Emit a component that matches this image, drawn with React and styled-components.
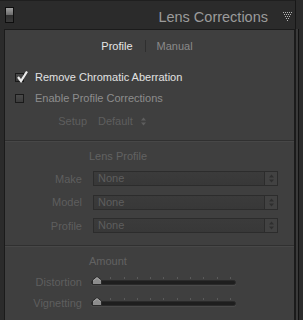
import React from 'react';
import styled, { createGlobalStyle } from 'styled-components';

const GlobalStyle = createGlobalStyle`
  html, body {
    margin: 0;
    padding: 0;
    background: #2b2b2b;
  }
  body {
    font-family: 'Liberation Sans', Arial, sans-serif;
  }
`;

const Frame = styled.div`
  display: flex;
  width: 303px;
  height: 320px;
  overflow: hidden;
  background: #2b2b2b;
`;

const Main = styled.div`
  width: 296px;
  display: flex;
  flex-direction: column;
`;

const Side = styled.div`
  flex: 1;
  display: flex;
  flex-direction: column;
`;

const SideCap = styled.div`
  height: 29px;
  background: #2b2b2b;
`;

const SideRail = styled.div`
  flex: 1;
  background: linear-gradient(
    to right,
    #3a3a3a 0 2px,
    #121212 2px 3px,
    #2b2b2b 3px
  );
`;

const Header = styled.div`
  height: 29px;
  box-sizing: border-box;
  border-top: 1px solid #1f1f1f;
  border-right: 1px solid #171717;
  display: flex;
  align-items: center;
  padding-left: 5px;
`;

const Toggle = styled.div`
  width: 9px;
  height: 16px;
  box-sizing: border-box;
  border: 1px solid #0e0e0e;
  background: linear-gradient(#a0a0a0 0%, #6a6a6a 50%, #2e2e2e 50%, #3a3a3a 100%);
`;

const Title = styled.div`
  margin-left: auto;
  margin-top: 3px;
  font-size: 14.5px;
  color: #9b9b9b;
`;

const Collapse = styled.svg`
  margin: 3px 2px 0 15px;
  display: block;
`;

const Panel = styled.div`
  flex: 1;
  margin-left: 4px;
  background: #3f3f3f;
  border: 1px solid #1b1b1b;
  border-right-width: 2px;
  border-bottom: none;
  font-size: 11px;
`;

const Tabs = styled.div`
  height: 32px;
  display: flex;
  align-items: center;
  justify-content: center;
  padding-right: 5px;
`;

const Tab = styled.span`
  color: ${(p) => (p.$active ? '#e6e6e6' : '#8a8a8a')};
`;

const TabDivider = styled.span`
  width: 1px;
  height: 12px;
  margin: 0 11px 0 12px;
  background: #2f2f2f;
`;

const Section = styled.div`
  padding: 8px 0 ${(p) => p.$bottom || 0}px;
  border-top: ${(p) => (p.$ruled ? '1px solid #303030' : 'none')};
  box-shadow: ${(p) => (p.$ruled ? 'inset 0 1px 0 #474747' : 'none')};
`;

const Row = styled.div`
  height: ${(p) => p.$h || 14}px;
  margin-top: ${(p) => p.$mt || 0}px;
  display: flex;
  align-items: center;
`;

const CheckRow = styled(Row)`
  padding-left: 10px;
`;

const Box = styled.div`
  position: relative;
  width: 9px;
  height: 9px;
  box-sizing: border-box;
  border: 1px solid #1a1a1a;
  background: linear-gradient(#4a4a4a, #3c3c3c);
  margin-right: 11px;
`;

const Tick = styled.svg`
  position: absolute;
  left: 0;
  top: -3px;
  overflow: visible;
`;

const CheckLabel = styled.span`
  color: ${(p) => (p.$on ? '#e2e2e2' : '#8d8d8d')};
`;

const Label = styled.span`
  width: ${(p) => p.$w || 77}px;
  flex: none;
  text-align: right;
  color: #5e5e5e;
  margin-right: ${(p) => p.$gap || 11}px;
`;

const Value = styled.span`
  color: #5e5e5e;
`;

const UpDown = styled.svg`
  display: block;
  margin-left: ${(p) => p.$ml || 0}px;
`;

const GroupTitle = styled.div`
  height: 14px;
  line-height: 14px;
  padding-left: 84px;
  color: #626262;
`;

const Select = styled.div`
  width: 185px;
  height: 15px;
  display: flex;
`;

const Field = styled.div`
  flex: 1;
  box-sizing: border-box;
  border: 1px solid #2c2c2c;
  background: linear-gradient(#3b3b3b, #383838);
  padding-left: 4px;
  line-height: 13px;
  color: #5e5e5e;
`;

const Stepper = styled.div`
  width: 13px;
  box-sizing: border-box;
  border: 1px solid #2c2c2c;
  border-left: none;
  background: #424242;
  display: flex;
  align-items: center;
  justify-content: center;
`;

const Slider = styled.div`
  position: relative;
  width: 145px;
  height: 14px;
  display: flex;
  flex-direction: column;
`;

const Ticks = styled.div`
  margin-top: 2px;
  height: 2px;
  display: flex;
  justify-content: space-between;
  padding: 0 5px 0 6px;
  span {
    width: 1px;
    height: 2px;
    background: #5a5a5a;
  }
`;

const Track = styled.div`
  margin-top: 1px;
  height: 5px;
  box-sizing: border-box;
  border: 1px solid #2a2a2a;
  border-radius: 3px;
  background: #1e1e1e;
  box-shadow: 0 1px 0 #4a4a4a;
`;

const Thumb = styled.svg`
  position: absolute;
  left: 1px;
  top: 1px;
`;

function Arrows({ color = '#2c2c2c', ml }) {
  return (
    <UpDown width="5" height="9" viewBox="0 0 5 9" $ml={ml}>
      <polygon points="0,3.5 2.5,0.5 5,3.5" fill={color} />
      <polygon points="0,5.5 5,5.5 2.5,8.5" fill={color} />
    </UpDown>
  );
}

function LensSelect({ label }) {
  return (
    <Row $h={15} $mt={label === 'Make' ? 8 : 8.5}>
      <Label>{label}</Label>
      <Select>
        <Field>None</Field>
        <Stepper>
          <Arrows color="#2e2e2e" />
        </Stepper>
      </Select>
    </Row>
  );
}

function AmountSlider({ label, mt }) {
  return (
    <Row $mt={mt}>
      <Label $gap={9}>{label}</Label>
      <Slider>
        <Ticks>
          {Array.from({ length: 11 }).map((_, i) => (
            <span key={i} />
          ))}
        </Ticks>
        <Track />
        <Thumb width="10" height="9" viewBox="0 0 10 9">
          <path
            d="M5 0.5 L9.5 4 L9.5 8.5 L0.5 8.5 L0.5 4 Z"
            fill="#8c8c8c"
            stroke="#2a2a2a"
            strokeWidth="1"
          />
          <path d="M1.5 4.5 L5 1.8 L8.5 4.5" fill="none" stroke="#aaaaaa" strokeWidth="0.8" />
        </Thumb>
      </Slider>
    </Row>
  );
}

export default function App() {
  return (
    <>
      <GlobalStyle />
      <Frame>
        <Main>
          <Header>
            <Toggle />
            <Title>Lens Corrections</Title>
            <Collapse width="10" height="9" viewBox="0 0 10 9">
              {[5, 4, 3, 2, 1].map((n, r) =>
                Array.from({ length: n }).map((_, i) => (
                  <rect
                    key={`${r}-${i}`}
                    x={r + i * 2}
                    y={r * 2}
                    width="1"
                    height="1"
                    fill="#b4b4b4"
                  />
                ))
              )}
            </Collapse>
          </Header>
          <Panel>
            <Tabs>
              <Tab $active>Profile</Tab>
              <TabDivider />
              <Tab>Manual</Tab>
            </Tabs>

            <Section $bottom={12}>
              <CheckRow>
                <Box>
                  <Tick width="13" height="11" viewBox="0 0 13 11">
                    <polyline
                      points="2,6 5,10 11,0.5"
                      fill="none"
                      stroke="#ececec"
                      strokeWidth="2.2"
                    />
                  </Tick>
                </Box>
                <CheckLabel $on>Remove Chromatic Aberration</CheckLabel>
              </CheckRow>
              <CheckRow $mt={7}>
                <Box />
                <CheckLabel>Enable Profile Corrections</CheckLabel>
              </CheckRow>
              <Row $mt={9}>
                <Label $w={82}>Setup</Label>
                <Value>Default</Value>
                <Arrows color="#5e5e5e" ml={8} />
              </Row>
            </Section>

            <Section $ruled $bottom={12}>
              <GroupTitle>Lens Profile</GroupTitle>
              <LensSelect label="Make" />
              <LensSelect label="Model" />
              <LensSelect label="Profile" />
            </Section>

            <Section $ruled>
              <GroupTitle>Amount</GroupTitle>
              <AmountSlider label="Distortion" mt={7} />
              <AmountSlider label="Vignetting" mt={7} />
            </Section>
          </Panel>
        </Main>
        <Side>
          <SideCap />
          <SideRail />
        </Side>
      </Frame>
    </>
  );
}
